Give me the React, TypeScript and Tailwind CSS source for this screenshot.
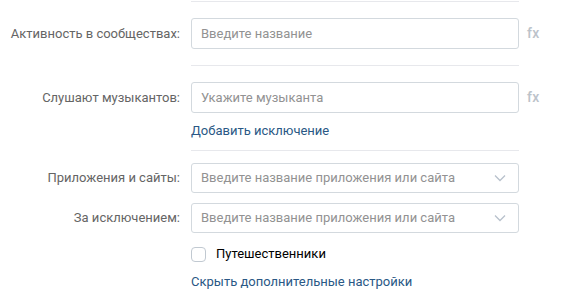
import React from "react";

const Divider = () => <div className="ml-[191px] w-[328px] h-px bg-[#e7e8ec]" />;

const Label = ({ children }: { children: React.ReactNode }) => (
  <div className="w-[180px] mr-[11px] text-right text-[#656565] leading-[16px]">{children}</div>
);

const Chevron = () => (
  <svg width="12" height="8" viewBox="0 0 12 8" className="shrink-0">
    <path d="M1 1.5 L6 6.5 L11 1.5" fill="none" stroke="#b8c1cc" strokeWidth="1.3" />
  </svg>
);

const Fx = () => <div className="ml-[8px] text-[#bcc3ca] text-[14px] font-medium tracking-[0.3px]">fx</div>;

export default function App() {
  return (
    <div className="w-[565px] h-[296px] bg-white overflow-hidden text-[13px] font-['Roboto',sans-serif]">
      <div className="pt-px">
        <Divider />
      </div>
      <div className="flex items-center mt-[16px]">
        <Label>Активность в сообществах:</Label>
        <div className="w-[328px] h-[31px] border border-[#d3d9de] rounded-[3px] px-[9px] flex items-center text-[#929292]">
          Введите название
        </div>
        <Fx />
      </div>
      <div className="mt-[16px]">
        <Divider />
      </div>
      <div className="flex items-center mt-[16px]">
        <Label>Слушают музыкантов:</Label>
        <div className="w-[328px] h-[31px] border border-[#d3d9de] rounded-[3px] px-[9px] flex items-center text-[#929292]">
          Укажите музыканта
        </div>
        <Fx />
      </div>
      <div className="ml-[191px] mt-[10px] text-[#2a5885] leading-[16px]">Добавить исключение</div>
      <div className="mt-[11px]">
        <Divider />
      </div>
      <div className="flex items-center mt-[12px]">
        <Label>Приложения и сайты:</Label>
        <div className="w-[328px] h-[30px] border border-[#d3d9de] rounded-[3px] pl-[9px] pr-[12px] flex items-center justify-between text-[#929292]">
          <span>Введите название приложения или сайта</span>
          <Chevron />
        </div>
      </div>
      <div className="flex items-center mt-[10px]">
        <Label>За исключением:</Label>
        <div className="w-[328px] h-[30px] border border-[#d3d9de] rounded-[3px] pl-[9px] pr-[12px] flex items-center justify-between text-[#929292]">
          <span>Введите название приложения или сайта</span>
          <Chevron />
        </div>
      </div>
      <div className="flex items-center ml-[191px] mt-[13px]">
        <div className="w-[15px] h-[15px] border border-[#c1c9d1] rounded-[4px] bg-white" />
        <span className="ml-[10px] text-black leading-[16px]">Путешественники</span>
      </div>
      <div className="ml-[191px] mt-[12px] text-[#2a5885] leading-[16px]">Скрыть дополнительные настройки</div>
    </div>
  );
}
